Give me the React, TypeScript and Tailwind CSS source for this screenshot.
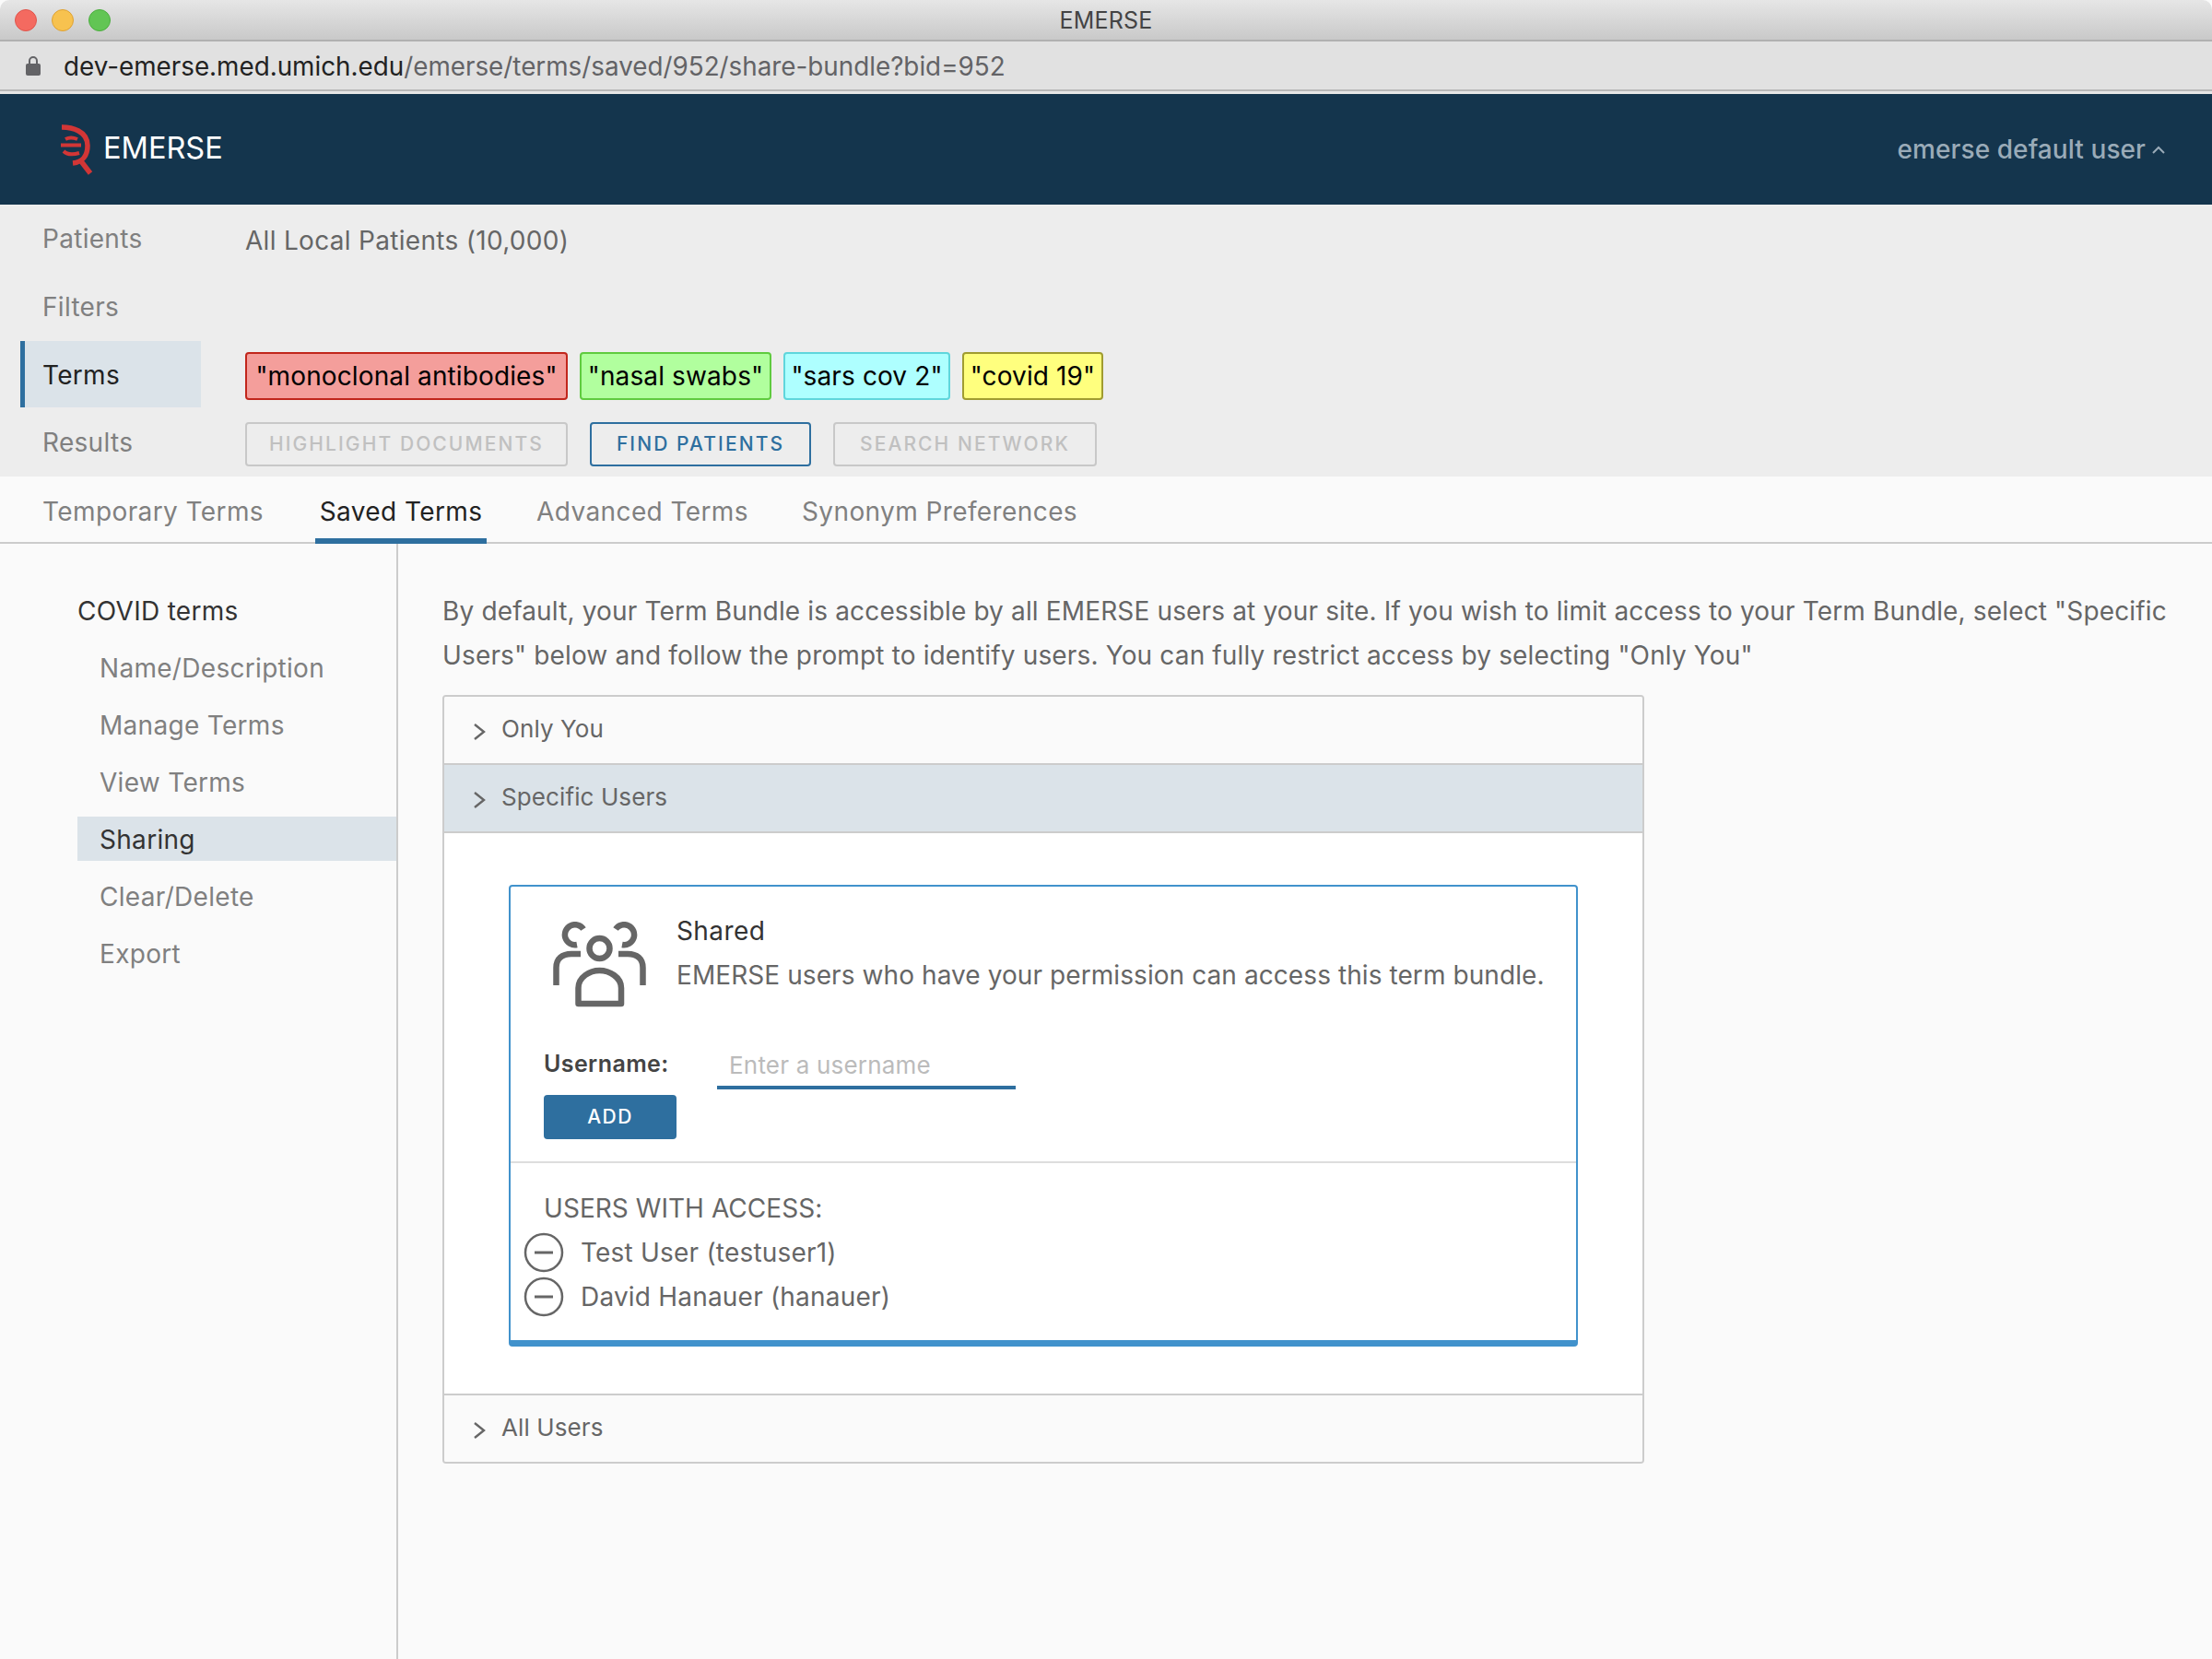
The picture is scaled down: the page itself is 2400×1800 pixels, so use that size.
import React from "react";

const NavLabel = ({ children, active }: { children: React.ReactNode; active?: boolean }) => (
  <div className={active
    ? "ml-[22px] flex h-full w-[196px] items-center border-l-[5px] border-[#2e6f9f] bg-[#dbe3e9] pl-[19px] pt-[1px] text-[#222]"
    : "ml-[22px] flex h-full w-[196px] items-center pl-[24px] pt-[1px] text-[#808080]"}>{children}</div>
);

const Chip = ({ children, cls }: { children: React.ReactNode; cls: string }) => (
  <div className={"flex h-[52px] items-center justify-center rounded-[4px] border-2 text-[28px] tracking-[0.12px] text-black " + cls}>{children}</div>
);

const OutlineBtn = ({ children, cls }: { children: React.ReactNode; cls: string }) => (
  <div className={"flex h-[48px] items-center justify-center rounded-[4px] border-2 text-[21px] font-medium tracking-[2.1px] " + cls}>{children}</div>
);

const Chevron = () => (
  <svg width="14" height="18" viewBox="0 0 14 18" fill="none" stroke="#666" strokeWidth="2.4" className="ml-[31px] mr-[17px] mt-[7px]">
    <path d="M2 1l10 8-10 8" />
  </svg>
);

const AccRow = ({ children, cls }: { children: React.ReactNode; cls: string }) => (
  <div className={"flex items-center pb-[3px] text-[26px] tracking-[0.1px] text-[#666] " + cls}><Chevron />{children}</div>
);

const Minus = () => (
  <svg width="44" height="44" viewBox="0 0 44 44" fill="none" stroke="#666" strokeWidth="2.5">
    <circle cx="22" cy="22" r="20" />
    <path d="M12 22h20" strokeWidth="3" />
  </svg>
);

export default function App() {
  return (
    <div className="flex h-[1800px] w-[2400px] flex-col overflow-hidden bg-[#fafafa] font-['Inter','Noto_Sans',sans-serif] tracking-[0.4px]">
      <div className="relative flex h-[45px] items-center justify-center rounded-t-[10px] border-b-2 border-[#b1b1b1] bg-gradient-to-b from-[#e6e6e6] to-[#c9c9c9] pt-[2px] text-[25px] tracking-[0.2px] text-[#444]">
        <div className="absolute left-[16px] top-[10px] flex gap-[16px]">
          <div className="h-[24px] w-[24px] rounded-full border border-[#e0554c] bg-[#f46a60]" />
          <div className="h-[24px] w-[24px] rounded-full border border-[#dfa233] bg-[#f7c24f]" />
          <div className="h-[24px] w-[24px] rounded-full border border-[#4cae3f] bg-[#62c554]" />
        </div>
        EMERSE
      </div>
      <div className="flex h-[54px] items-center border-b-2 border-[#b8b8b8] bg-[#e1e1e1] pl-[28px] pt-[3px] text-[27.800px] tracking-normal text-[#636366]">
        <svg width="16" height="22" viewBox="0 0 16 22" className="mr-[25px] -mt-[3px]">
          <path d="M4 9V6a4 4 0 018 0v3" fill="none" stroke="#636366" strokeWidth="2" />
          <rect x="0" y="9" width="16" height="13" rx="2" fill="#636366" />
        </svg>
        <span className="text-[#222]">dev-emerse.med.umich.edu</span>/emerse/terms/saved/952/share-bundle?bid=952
      </div>
      <div className="h-[3px] bg-[#e6e6e6]" />

      <div className="flex h-[120px] items-center justify-between bg-[#14354d]">
        <div className="ml-[64px] flex items-center">
          <svg width="38" height="58" viewBox="0 0 38 58" fill="none" stroke="#d23636" strokeWidth="5.500" className="mr-[10px] -mt-[2px]">
            <path d="M3 6C14 6 31 10 31 26C31 36 26 44 15 45" />
            <path d="M7 19C11 17 15 17 20 19" strokeWidth="4" />
            <path d="M2 25.500H24" strokeWidth="4" />
            <path d="M5 32C9 36 15 36 22 34" strokeWidth="4" />
            <path d="M24 43L34 56" />
          </svg>
          <span className="pb-[2px] text-[32.500px] leading-none tracking-normal text-white">EMERSE</span>
        </div>
        <div className="mr-[51px] flex items-center text-[28px] font-medium tracking-[0.08px] text-[#9aabb8]">
          emerse default user
          <svg width="14" height="9" viewBox="0 0 14 9" fill="none" stroke="#9aabb8" strokeWidth="2" className="ml-[7px]">
            <path d="M1 8l6-6 6 6" />
          </svg>
        </div>
      </div>

      <div className="bg-[#ededed] text-[28px] tracking-[0.3px]">
        <div className="flex h-[73px] items-center">
          <NavLabel>Patients</NavLabel>
          <div className="ml-[48px] mt-[5px] text-[#666]">All Local Patients (10,000)</div>
        </div>
        <div className="flex h-[75px] items-center"><NavLabel>Filters</NavLabel></div>
        <div className="flex h-[72px] items-center">
          <NavLabel active>Terms</NavLabel>
          <div className="ml-[48px] mt-[3px] flex gap-[13px]">
            <Chip cls="w-[350px] border-[#c1261c] bg-[#f49e9b]">"monoclonal antibodies"</Chip>
            <Chip cls="w-[208px] border-[#5fcb3f] bg-[#b1ff9e]">"nasal swabs"</Chip>
            <Chip cls="w-[181px] border-[#5fd6dc] bg-[#aeffff]">"sars cov 2"</Chip>
            <Chip cls="w-[153px] border-[#a09c30] bg-[#ffff7e]">"covid 19"</Chip>
          </div>
        </div>
        <div className="flex h-[75px] items-center">
          <NavLabel>Results</NavLabel>
          <div className="ml-[48px] mt-[4px] flex gap-[24px]">
            <OutlineBtn cls="w-[350px] border-[#c8c8c8] text-[#c0c0c0]">HIGHLIGHT DOCUMENTS</OutlineBtn>
            <OutlineBtn cls="w-[240px] border-[#2e6f9f] text-[#2e6f9f]">FIND PATIENTS</OutlineBtn>
            <OutlineBtn cls="w-[286px] border-[#c8c8c8] text-[#c0c0c0]">SEARCH NETWORK</OutlineBtn>
          </div>
        </div>
      </div>

      <div className="flex h-[73px] items-end border-b-2 border-[#cccccc] pl-[46px] text-[28px] text-[#808080]">
        <div className="flex h-[71px] items-center pt-[4px]">Temporary Terms</div>
        <div className="ml-[56px] -mb-[2px] flex h-[73px] w-[186px] items-center justify-center border-b-[6px] border-[#2e6f9f] pt-[9px] text-[#222]">Saved Terms</div>
        <div className="ml-[54px] flex h-[71px] items-center pt-[4px]">Advanced Terms</div>
        <div className="ml-[58px] flex h-[71px] items-center pt-[4px]">Synonym Preferences</div>
      </div>

      <div className="flex flex-1">
        <div className="w-[432px] shrink-0 border-r-2 border-[#cccccc] pl-[84px] pt-[48px] text-[28px] tracking-[0.3px]">
          <div className="flex h-[50px] items-center text-[#333]">COVID terms</div>
          <div className="mt-[12px] flex flex-col gap-[14px] text-[#808080]">
            <div className="flex h-[48px] items-center pl-[24px] pt-[1px]">Name/Description</div>
            <div className="flex h-[48px] items-center pl-[24px] pt-[1px]">Manage Terms</div>
            <div className="flex h-[48px] items-center pl-[24px] pt-[1px]">View Terms</div>
            <div className="flex h-[48px] items-center bg-[#dbe3e9] pl-[24px] pt-[1px] text-[#333]">Sharing</div>
            <div className="flex h-[48px] items-center pl-[24px] pt-[1px]">Clear/Delete</div>
            <div className="flex h-[48px] items-center pl-[24px] pt-[1px]">Export</div>
          </div>
        </div>

        <div className="flex-1 pl-[48px] pt-[48px]">
          <p className="w-[1890px] pt-[1px] text-[28px] leading-[48px] tracking-[0.15px] text-[#666]">
            By default, your Term Bundle is accessible by all EMERSE users at your site. If you wish to limit access to your Term Bundle, select "Specific Users" below and follow the prompt to identify users. You can fully restrict access by selecting "Only You"
          </p>
          <div className="mt-[19px] w-[1304px] overflow-hidden rounded-[4px] border-2 border-[#cccccc]">
            <AccRow cls="h-[74px] border-b-2 border-[#cccccc] bg-[#fafafa]">Only You</AccRow>
            <AccRow cls="h-[74px] border-b-2 border-[#cccccc] bg-[#dbe3e9]">Specific Users</AccRow>
            <div className="h-[610px] border-b-2 border-[#cccccc] bg-white pl-[70px] pt-[56px]">
              <div className="w-[1160px] rounded-[4px] border-2 border-b-[7px] border-[#4192cc] bg-white">
                <div className="flex pl-[46px] pt-[38px]">
                  <svg width="102" height="94" viewBox="0 0 102 94" fill="none" stroke="#666" strokeWidth="6.500" className="shrink-0">
                    <circle cx="50.500" cy="29" r="11" />
                    <path d="M33 8A11 11 0 1 0 26 25" />
                    <path d="M68 8A11 11 0 1 1 75 25" />
                    <path d="M30 35H20C10 35 3.500 40 3.500 50V69" />
                    <path d="M71 35H81C91 35 97.500 40 97.500 50V69" />
                    <path d="M27.500 72C27.500 60 40 53 50.500 53S74 60 74 72V89H27.500Z" strokeLinejoin="round" />
                  </svg>
                  <div className="ml-[32px] -mt-[2px] text-[28px]">
                    <div className="flex h-[24px] items-center text-[#333]">Shared</div>
                    <div className="mt-[24px] flex h-[24px] items-center whitespace-nowrap tracking-[0.08px] text-[#666]">EMERSE users who have your permission can access this term bundle.</div>
                  </div>
                </div>
                <div className="ml-[36px] mt-[40px] flex">
                  <div className="flex h-[48px] w-[188px] items-center pb-[7px] text-[25px] font-semibold text-[#444]">Username:</div>
                  <div className="flex h-[48px] w-[324px] items-center border-b-[4px] border-[#2e6f9f] pb-[2px] pl-[13px] text-[26px] tracking-[0.2px] text-[#bbbbbb]">Enter a username</div>
                </div>
                <div className="ml-[36px] mt-[6px] flex h-[48px] w-[144px] items-center justify-center rounded-[4px] bg-[#2e6f9f] text-[21px] font-medium tracking-[1.5px] text-white">ADD</div>
                <div className="mt-[24px] border-t-2 border-[#dddddd] pb-[23px] pt-[25px] text-[28px] tracking-[0.2px] text-[#666]">
                  <div className="flex h-[48px] items-center pl-[36px] tracking-[0.05px]">USERS WITH ACCESS:</div>
                  <div className="flex h-[48px] items-center pl-[14px]"><Minus /><span className="ml-[18px]">Test User (testuser1)</span></div>
                  <div className="flex h-[48px] items-center pl-[14px]"><Minus /><span className="ml-[18px]">David Hanauer (hanauer)</span></div>
                </div>
              </div>
            </div>
            <AccRow cls="h-[72px] bg-[#fafafa]">All Users</AccRow>
          </div>
        </div>
      </div>
    </div>
  );
}
